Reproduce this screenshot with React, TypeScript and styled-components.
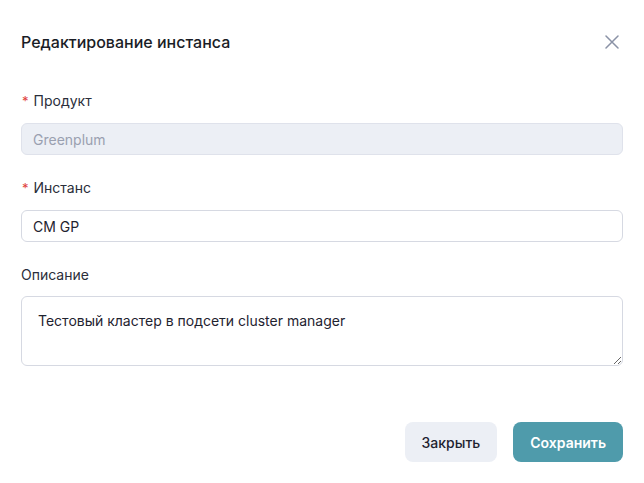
import React from "react";
import styled, { createGlobalStyle } from "styled-components";

const Global = createGlobalStyle`
  html, body { margin: 0; padding: 0; background: #fff; }
  body { font-family: "Inter", "Noto Sans", sans-serif; color: #1f2330; }
  * { box-sizing: border-box; }
`;

const Dialog = styled.div`
  width: 644px;
  height: 483px;
  background: #fff;
  padding: 0 21px;
  display: flex;
  flex-direction: column;
`;

const Header = styled.div`
  display: flex;
  align-items: center;
  justify-content: space-between;
  height: 42px;
  margin-top: 21px;
  margin-bottom: 28px;
`;

const Title = styled.h1`
  margin: 0;
  font-size: 16px;
  font-weight: 500;
  color: #1a1d26;
`;

const CloseButton = styled.button`
  border: 0;
  background: none;
  padding: 0;
  width: 20px;
  height: 20px;
  display: flex;
  align-items: center;
  justify-content: center;
  margin-right: 1px;
  cursor: pointer;
`;

const Field = styled.div<{ $gap?: number }>`
  display: flex;
  flex-direction: column;
  gap: ${(p) => p.$gap ?? 12}px;
  margin-bottom: 23px;
`;

const Label = styled.label`
  font-size: 14px;
  color: #2a2e3a;
  height: 20px;
  line-height: 20px;
  display: flex;
  align-items: center;
`;

const Star = styled.span`
  color: #e0413c;
  font-size: 13px;
  margin-right: 5px;
  margin-left: 1px;
`;

const Input = styled.input<{ $disabled?: boolean }>`
  height: 32px;
  width: 100%;
  border: 1px solid ${(p) => (p.$disabled ? "#dfe2eb" : "#d6d9e2")};
  background: ${(p) => (p.$disabled ? "#eceff5" : "#fff")};
  border-radius: 6px;
  padding: 0 11px;
  font-family: inherit;
  font-size: 14px;
  color: ${(p) => (p.$disabled ? "#9aa0b0" : "#1f2330")};
  -webkit-text-fill-color: ${(p) => (p.$disabled ? "#9aa0b0" : "#1f2330")};
  outline: none;
  opacity: 1;
`;

const TextArea = styled.textarea`
  height: 70px;
  width: 100%;
  border: 1px solid #d6d9e2;
  border-radius: 6px;
  padding: 14px 16px;
  font-family: inherit;
  font-size: 14px;
  line-height: 20px;
  color: #1f2330;
  outline: none;
  resize: vertical;
`;

const Footer = styled.div`
  display: flex;
  justify-content: flex-end;
  gap: 16px;
  margin-top: 33px;
`;

const Button = styled.button<{ $primary?: boolean }>`
  height: 40px;
  border: 0;
  border-radius: 8px;
  padding: 0 17px;
  font-family: inherit;
  font-size: 14px;
  font-weight: ${(p) => (p.$primary ? 600 : 500)};
  background: ${(p) => (p.$primary ? "#4f9bab" : "#eceff5")};
  color: ${(p) => (p.$primary ? "#fff" : "#1f2330")};
  cursor: pointer;
`;

export default function App() {
  return (
    <>
      <Global />
      <Dialog>
        <Header>
          <Title>Редактирование инстанса</Title>
          <CloseButton aria-label="close">
            <svg width="14" height="14" viewBox="0 0 14 14">
              <path d="M1 1L13 13M13 1L1 13" stroke="#8a92a6" strokeWidth="1.5" strokeLinecap="round" />
            </svg>
          </CloseButton>
        </Header>
        <Field>
          <Label><Star>*</Star>Продукт</Label>
          <Input $disabled disabled value="Greenplum" readOnly />
        </Field>
        <Field>
          <Label><Star>*</Star>Инстанс</Label>
          <Input value="CM GP" readOnly />
        </Field>
        <Field $gap={11}>
          <Label>Описание</Label>
          <TextArea value="Тестовый кластер в подсети cluster manager" readOnly />
        </Field>
        <Footer>
          <Button>Закрыть</Button>
          <Button $primary>Сохранить</Button>
        </Footer>
      </Dialog>
    </>
  );
}
